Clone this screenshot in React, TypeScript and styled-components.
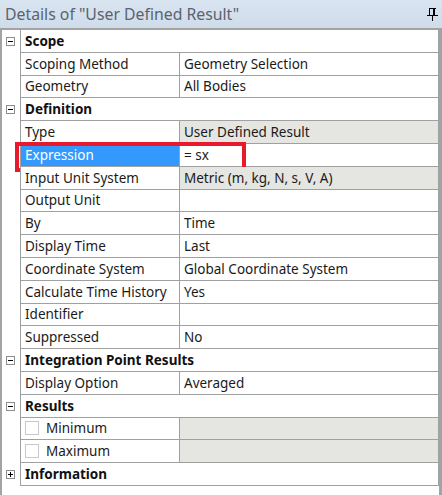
import React from "react";
import styled, { createGlobalStyle } from "styled-components";

const Global = createGlobalStyle`
  html, body { margin: 0; padding: 0; background: #ffffff; }
  body { font-family: "Noto Sans", "Open Sans", sans-serif; }
`;

const Panel = styled.div`
  width: 442px;
  height: 495px;
  display: flex;
  flex-direction: column;
  background: #ffffff;
  overflow: hidden;
`;

const TitleBar = styled.div`
  height: 28px;
  flex: none;
  display: flex;
  align-items: center;
  justify-content: space-between;
  padding: 0 4px 0 5px;
  background: linear-gradient(#d9e4f1, #cfdcea);
  border-bottom: 2px solid #a3a3a3;
  box-sizing: content-box;
`;

const Title = styled.span`
  font-family: "Noto Sans", sans-serif;
  font-size: 15.8px;
  color: #5b636d;
  white-space: nowrap;
`;

const Body = styled.div`
  flex: 1;
  position: relative;
  border-left: 2px solid #a3a3a3;
  border-right: 3px solid #a3a3a3;
`;

const Row = styled.div`
  display: flex;
  height: 22.8px;
  position: relative;
`;

const Gutter = styled.div`
  width: 17px;
  flex: none;
  border-right: 1px solid #a0a0a0;
  display: flex;
  align-items: center;
  justify-content: center;
  padding-left: 1px;
  box-sizing: content-box;
`;

const ToggleBox = styled.div`
  width: 9px;
  height: 9px;
  box-sizing: border-box;
  border: 1px solid #8d8d8d;
  background: #ffffff;
  position: relative;
  margin-left: -3px;
  &::before {
    content: "";
    position: absolute;
    left: 1px;
    top: 3px;
    width: 5px;
    height: 1px;
    background: #000;
  }
`;

const PlusBox = styled(ToggleBox)`
  &::after {
    content: "";
    position: absolute;
    left: 3px;
    top: 1px;
    width: 1px;
    height: 5px;
    background: #000;
  }
`;

const HeaderCell = styled.div`
  flex: 1;
  box-sizing: border-box;
  border-bottom: 1px solid #a0a0a0;
  border-right: 1px solid #a0a0a0;
  display: flex;
  align-items: center;
  padding-left: 4px;
  font-family: "Noto Sans", sans-serif;
  font-weight: 700;
  font-size: 13.5px;
  color: #111;
  white-space: nowrap;
`;

const NameCell = styled.div<{ $selected?: boolean }>`
  width: 159px;
  flex: none;
  box-sizing: border-box;
  border-bottom: 1px solid #a0a0a0;
  border-right: 1px solid #a0a0a0;
  display: flex;
  align-items: center;
  gap: 7px;
  padding-left: 4px;
  font-family: "Noto Sans", sans-serif;
  font-size: 13.5px;
  color: ${(p) => (p.$selected ? "#ffffff" : "#1a1a1a")};
  background: ${(p) => (p.$selected ? "#3399ff" : "#ffffff")};
  white-space: nowrap;
`;

const ValueCell = styled.div<{ $readonly?: boolean }>`
  flex: 1;
  box-sizing: border-box;
  border-bottom: 1px solid #a0a0a0;
  border-right: 1px solid #a0a0a0;
  display: flex;
  align-items: center;
  padding-left: 4px;
  font-family: "Noto Sans", sans-serif;
  font-size: 13.5px;
  color: #1a1a1a;
  background: ${(p) => (p.$readonly ? "#e5e5e1" : "#ffffff")};
  white-space: nowrap;
`;

const CheckBox = styled.span`
  width: 14px;
  height: 14px;
  box-sizing: border-box;
  border: 1px solid #c9c9c9;
  background: #fff;
  flex: none;
`;

const Highlight = styled.div`
  position: absolute;
  left: 13px;
  top: -2px;
  width: 231px;
  height: 30px;
  box-sizing: border-box;
  border: 4px solid #e8192c;
  pointer-events: none;
`;

const PinIcon = () => (
  <svg width="11" height="13" viewBox="0 0 11 13" shapeRendering="crispEdges">
    <rect x="2" y="0" width="7" height="1" fill="#000" />
    <rect x="2" y="0" width="1" height="7" fill="#000" />
    <rect x="6" y="0" width="2" height="7" fill="#000" />
    <rect x="0" y="7" width="11" height="1" fill="#000" />
    <rect x="5" y="8" width="1" height="5" fill="#000" />
  </svg>
);

type Item =
  | { kind: "group"; label: string; open: boolean }
  | { kind: "prop"; name: string; value: string; readonly?: boolean; selected?: boolean; check?: boolean };

const items: Item[] = [
  { kind: "group", label: "Scope", open: true },
  { kind: "prop", name: "Scoping Method", value: "Geometry Selection" },
  { kind: "prop", name: "Geometry", value: "All Bodies" },
  { kind: "group", label: "Definition", open: true },
  { kind: "prop", name: "Type", value: "User Defined Result", readonly: true },
  { kind: "prop", name: "Expression", value: "= sx", selected: true },
  { kind: "prop", name: "Input Unit System", value: "Metric (m, kg, N, s, V, A)", readonly: true },
  { kind: "prop", name: "Output Unit", value: "" },
  { kind: "prop", name: "By", value: "Time" },
  { kind: "prop", name: "Display Time", value: "Last" },
  { kind: "prop", name: "Coordinate System", value: "Global Coordinate System" },
  { kind: "prop", name: "Calculate Time History", value: "Yes" },
  { kind: "prop", name: "Identifier", value: "" },
  { kind: "prop", name: "Suppressed", value: "No" },
  { kind: "group", label: "Integration Point Results", open: true },
  { kind: "prop", name: "Display Option", value: "Averaged" },
  { kind: "group", label: "Results", open: true },
  { kind: "prop", name: "Minimum", value: "", readonly: true, check: true },
  { kind: "prop", name: "Maximum", value: "", readonly: true, check: true },
  { kind: "group", label: "Information", open: false },
];

export default function App() {
  return (
    <>
      <Global />
      <Panel>
        <TitleBar>
          <Title>Details of "User Defined Result"</Title>
          <PinIcon />
        </TitleBar>
        <Body>
          {items.map((it, i) =>
            it.kind === "group" ? (
              <Row key={i}>
                <Gutter>{it.open ? <ToggleBox /> : <PlusBox />}</Gutter>
                <HeaderCell>{it.label}</HeaderCell>
              </Row>
            ) : (
              <Row key={i}>
                <Gutter />
                <NameCell $selected={it.selected}>
                  {it.check && <CheckBox />}
                  {it.name}
                </NameCell>
                <ValueCell $readonly={it.readonly}>{it.value}</ValueCell>
                {it.selected && <Highlight />}
              </Row>
            )
          )}
        </Body>
      </Panel>
    </>
  );
}
